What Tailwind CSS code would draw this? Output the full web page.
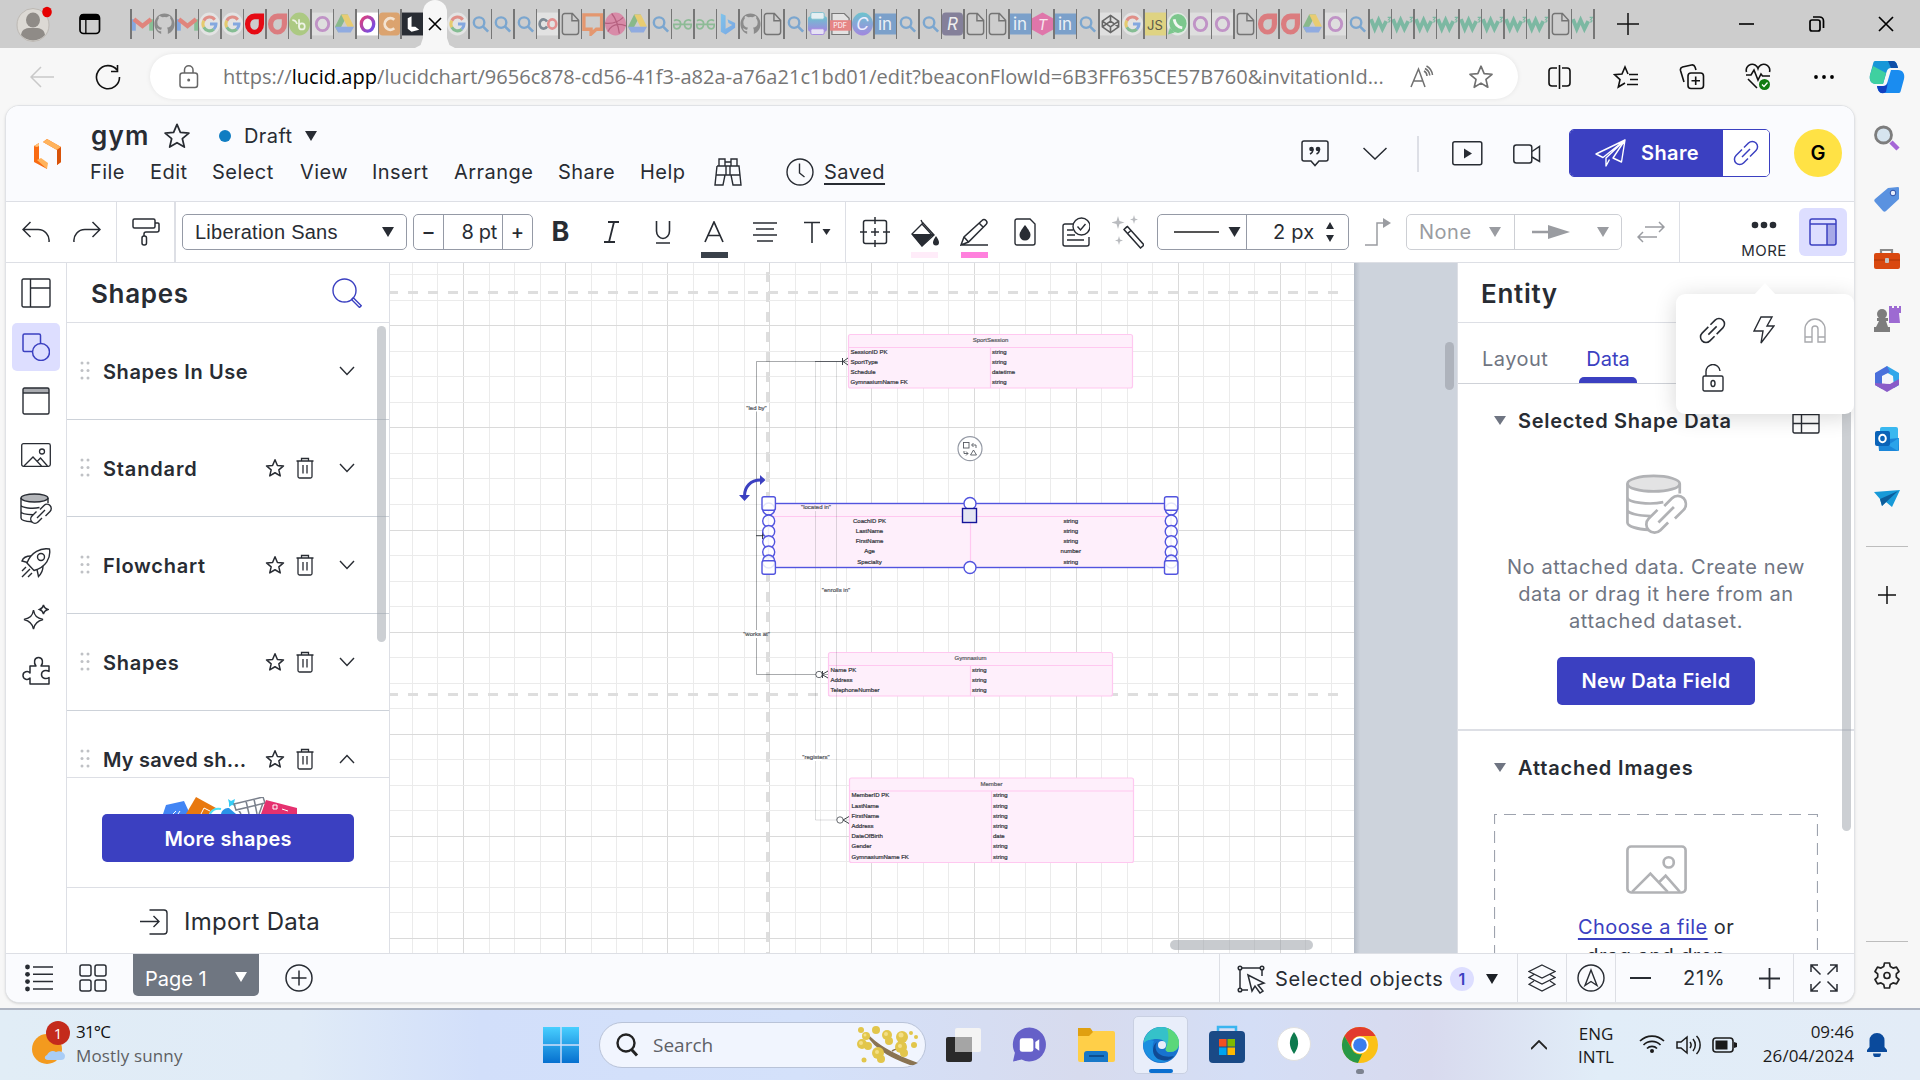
<!DOCTYPE html>
<html lang="en"><head><meta charset="utf-8"><title>gym: Lucidchart</title>
<script src="https://cdn.jsdelivr.net/npm/@tailwindcss/browser@4"></script></head>
<body class="w-[1920px] h-[1080px] overflow-hidden bg-[#f7f7f7] text-[#282c33] font-['Inter',sans-serif] text-[20px] flex flex-col">

<!-- shared symbols -->
<svg width="0" height="0" class="absolute">
<defs>
<linearGradient id="gBlue" x1="0" y1="0" x2="0" y2="1"><stop offset="0" stop-color="#48cfff"/><stop offset="1" stop-color="#0670cf"/></linearGradient>
<linearGradient id="gRing" x1="0" y1="0" x2="1" y2="1"><stop offset="0" stop-color="#e0407a"/><stop offset="1" stop-color="#6a4df0"/></linearGradient>
<linearGradient id="gTeal" x1="0" y1="0" x2="0" y2="1"><stop offset="0" stop-color="#6cc4ce"/><stop offset="1" stop-color="#a287e0"/></linearGradient>
<linearGradient id="gBing" x1="0" y1="0" x2="1" y2="1"><stop offset="0" stop-color="#7fc3ea"/><stop offset="1" stop-color="#7aa6e4"/></linearGradient>
</defs>
<symbol id="gmail" viewBox="0 0 22 24"><path d="M2 19V7" stroke="#84a8df" stroke-width="4"/><path d="M20 19V7" stroke="#88bf96" stroke-width="4"/><path d="M2 7l9 7 9-7" fill="none" stroke="#e0857d" stroke-width="4.500"/></symbol>
<symbol id="github" viewBox="0 0 22 24"><path d="M11 1C5 1 .5 6 .5 12c0 5 3 9 7 10.500v-3c-3 .5-3.500-1-4.500-3 2 0 2 2 4.500 1.500.2-1 .5-1.500 1-2-3-.5-5-2-5-5.500 0-1.500.5-3 1.500-4-.2-1-.2-2 .3-3 1.500 0 2.700.8 3.500 1.400a9 9 0 0 1 4.500 0C14 4.300 15.200 3.500 16.700 3.500c.5 1 .5 2 .3 3 1 1 1.500 2.500 1.500 4 0 3.500-2 5-5 5.500.8.7 1 1.700 1 3v3.500c4-1.500 7-5.500 7-10.500C21.500 6 17 1 11 1z" fill="#8b8b8b"/></symbol>
<symbol id="google" viewBox="0 0 22 24"><ellipse cx="11" cy="12" rx="11" ry="12" fill="#e3e3e3"/><g fill="none" stroke-width="3.200"><path d="M16.500 7.500A7 7.500 0 0 0 5 8.500" stroke="#e08f88"/><path d="M5 8.500a7.500 7.500 0 0 0 0 7" stroke="#e5cb70"/><path d="M5 15.500a7 7.500 0 0 0 10.500 2" stroke="#85bd93"/><path d="M11.500 12h6.300a7.500 7.500 0 0 1-2.300 5.500" stroke="#84a8df"/></g></symbol>
<symbol id="red" viewBox="0 0 22 24"><path fill-rule="evenodd" d="M21 1v11A10 11 0 1 1 11 1zM11 7a4.500 5.500 0 1 0 4.500 5.500V7z" fill="#e60a14"/></symbol>
<symbol id="pink" viewBox="0 0 22 24"><path fill-rule="evenodd" d="M21 1v11A10 11 0 1 1 11 1zM11 7a4.500 5.500 0 1 0 4.500 5.500V7z" fill="#db7c7f"/></symbol>
<symbol id="greenb" viewBox="0 0 22 24"><ellipse cx="11" cy="12" rx="11" ry="12" fill="#acc983"/><path d="M10.500 7v8.500M3.500 8c3 0 4 1.500 5 4" stroke="#eef3e6" stroke-width="1.800" fill="none"/><ellipse cx="13.500" cy="14.500" rx="3" ry="3.200" stroke="#eef3e6" stroke-width="1.800" fill="none"/></symbol>
<symbol id="ring" viewBox="0 0 22 24"><path d="M0 0h22v24H0z" fill="#dedede"/><ellipse cx="11" cy="12" rx="6.500" ry="7" fill="none" stroke="#c093c6" stroke-width="3"/></symbol>
<symbol id="ring2" viewBox="0 0 22 24"><path d="M0 0h22v24H0z" fill="#fff"/><ellipse cx="11" cy="12" rx="6.500" ry="7.500" fill="none" stroke="url(#gRing)" stroke-width="3.500"/></symbol>
<symbol id="drive" viewBox="0 0 22 24"><path d="M7.500 2h7L8 14l-3.500 7L1 15z" fill="#88b98a"/><path d="M7.500 2h7L21 15h-7z" fill="#e8cc72"/><path d="M1 15h20l-3.500 6h-13z" fill="#90abe0"/></symbol>
<symbol id="orangec" viewBox="0 0 22 24"><rect width="22" height="24" rx="4" fill="#dba36f"/><path d="M16 7.500a6 6 0 1 0 0 9" fill="none" stroke="#f3e3d2" stroke-width="3"/></symbol>
<symbol id="lucid" viewBox="0 0 22 24"><path d="M0 0h22v24H0z" fill="#282c33"/><path d="M6 6l4-2v11h4l4 3-8 2-4-3z" fill="#fff"/></symbol>
<symbol id="lens" viewBox="0 0 22 24"><circle cx="9.500" cy="10.500" r="5.500" fill="none" stroke="#7ba6cf" stroke-width="2.500"/><path d="M13.500 14.500L19 20" stroke="#7ba6cf" stroke-width="2.800"/></symbol>
<symbol id="co" viewBox="0 0 22 24"><path d="M0 0h22v24H0z" fill="#e2e2e2"/><path d="M10.500 9.500a4.200 4.800 0 1 0 0 5" fill="none" stroke="#7f8a94" stroke-width="2.800"/><ellipse cx="16" cy="12" rx="4.200" ry="4.800" fill="none" stroke="#e39090" stroke-width="2.800"/></symbol>
<symbol id="file" viewBox="0 0 22 24"><path d="M13 1H5a2.500 2.500 0 0 0-2.500 2.500v17A2.500 2.500 0 0 0 5 23h12a2.500 2.500 0 0 0 2.500-2.500V8zM12.500 1v7.500h7" fill="none" stroke="#747474" stroke-width="1.500"/></symbol>
<symbol id="chat" viewBox="0 0 22 24"><path d="M2 2.500h18.500v15H15l-5.500 5v-5H2z" fill="none" stroke="#e4976f" stroke-width="3.500"/></symbol>
<symbol id="dribb" viewBox="0 0 22 24"><ellipse cx="11" cy="12" rx="11" ry="12" fill="#d88ba8"/><path d="M7 1c5 6 7 13 8 21M0 11c8 1 15-2 19-6M3 20c4-8 11-9 19-6" fill="none" stroke="#b5607f" stroke-width="1.300"/></symbol>
<symbol id="gfg" viewBox="0 0 22 24"><path d="M2 8.500c3-1.500 7-.5 7 3s-1.500 5.500-4 5.500-3.500-2-3-4.500M20 8.500c-3-1.500-7-.5-7 3s1.500 5.500 4 5.500 3.500-2 3-4.500M1 12.300h20" fill="none" stroke="#8dbb96" stroke-width="1.800"/></symbol>
<symbol id="bing" viewBox="0 0 22 24"><path d="M4 1l5 2v14l7-4-4-2-1-4 8 4v5l-10 7-5-3z" fill="url(#gBing)"/></symbol>
<symbol id="print" viewBox="0 0 22 24"><rect x="1" y="4" width="20" height="16" rx="3" fill="url(#gTeal)"/><rect x="4" y="0" width="14" height="7" rx="1.500" fill="#e4eff2" stroke="#7fbfcf"/><rect x="4" y="17" width="14" height="6" rx="1.500" fill="#e6e2f4" stroke="#a287e0"/></symbol>
<symbol id="pdf" viewBox="0 0 22 24"><path d="M2 1h13l5 5v17H2z" fill="#e2e2e2" stroke="#777" stroke-width="1.300"/><path d="M0 8h22v11H0z" fill="#e58585"/></symbol>
<symbol id="canva" viewBox="0 0 22 24"><ellipse cx="11" cy="12" rx="11" ry="12" fill="url(#gTeal)"/></symbol>
<symbol id="lin" viewBox="0 0 22 24"><path d="M0 1h22v22H0z" fill="#7ba0ca"/></symbol>
<symbol id="rr" viewBox="0 0 22 24"><rect width="22" height="24" rx="4" fill="#84809a"/></symbol>
<symbol id="tt" viewBox="0 0 22 24"><path d="M11 0l11 6v12l-11 6-11-6V6z" fill="#df76aa"/></symbol>
<symbol id="codepen" viewBox="0 0 22 24"><path d="M0 0h22v24H0z" fill="#dfdfdf"/><path d="M11 3l8.500 6v6L11 21l-8.500-6V9zM11 3v6M11 15v6M2.500 9l8.500 6 8.500-6M2.500 15L11 9l8.500 6" fill="none" stroke="#666" stroke-width="1.700"/></symbol>
<symbol id="js" viewBox="0 0 22 24"><path d="M0 0h22v24H0z" fill="#dfd382"/></symbol>
<symbol id="wa" viewBox="0 0 22 24"><ellipse cx="11" cy="12" rx="11" ry="12" fill="#e0e8e2"/><ellipse cx="11.500" cy="11.500" rx="9" ry="10" fill="#7cc78d"/><path d="M1 23l2-7 5 5z" fill="#7cc78d"/><path d="M7.500 7c1 6 4 8.500 8.500 9" fill="none" stroke="#f2f7f3" stroke-width="3"/></symbol>
<symbol id="w3" viewBox="0 0 22 24"><path d="M1 7l4 10 4-9 4 9 4-8" fill="none" stroke="#7cb8a2" stroke-width="4"/><path d="M18.500 5h3l-2 2.500c2 0 2 2.500-.5 2.500" fill="none" stroke="#7cb8a2" stroke-width="1.200"/></symbol>
<symbol id="star" viewBox="0 0 24 24"><path d="M12 2l2.900 6.900 7.300.6-5.600 4.800 1.700 7.200L12 17.700l-6.300 3.800 1.700-7.200L1.800 9.500l7.300-.6z" fill="none" stroke="currentColor" stroke-width="var(--sw,1.500)" stroke-linejoin="round"/></symbol>
<symbol id="trash" viewBox="0 0 18 22"><path d="M.5 4h17M5.500 4V1.500h7V4M2 4v15.500A1.500 1.500 0 0 0 3.500 21h11a1.500 1.500 0 0 0 1.500-1.500V4M7 8v8.500M11 8v8.500" fill="none" stroke="currentColor" stroke-width="1.300"/></symbol>
<symbol id="down" viewBox="0 0 16 10"><path d="M1 1l7 7.500L15 1" fill="none" stroke="currentColor" stroke-width="1.400"/></symbol>
<symbol id="tri" viewBox="0 0 12 12"><path d="M0 1h12L6 11z" fill="currentColor"/></symbol>
<symbol id="link" viewBox="0 0 26 26"><g fill="none" stroke="currentColor" stroke-width="1.500"><path d="M11 7.500l4.500-4.500a5 5 0 0 1 7.500 7.500L17 16.500M15 18.500L10.500 23A5 5 0 0 1 3 15.500L9 9.500M9 17l8-8"/></g></symbol>
<symbol id="grip" viewBox="0 0 10 20"><g fill="#bfc1c5"><circle cx="2" cy="2" r="1.500"/><circle cx="8" cy="2" r="1.500"/><circle cx="2" cy="9.500" r="1.500"/><circle cx="8" cy="9.500" r="1.500"/><circle cx="2" cy="17" r="1.500"/><circle cx="8" cy="17" r="1.500"/></g></symbol>
<symbol id="pic" viewBox="0 0 30 24"><g fill="none" stroke="currentColor" stroke-width="1.300"><rect x=".7" y=".7" width="28.600" height="22.600" rx="1.800"/><circle cx="21" cy="8.500" r="2.500"/><path d="M3 23l9-9 8.500 9M16.500 18l3-3 7 8"/></g></symbol>
<symbol id="data" viewBox="0 0 32 32"><g fill="none" stroke="currentColor" stroke-width="1.400"><ellipse cx="14.500" cy="5" rx="13.500" ry="4" fill="var(--top,#b4b6ba)"/><path d="M1 5v20c0 2 5 3.500 11 3.800M28 5v5M1 12c0 3 12 4 18.500 2.500M1 18.500c0 2 6 3 12 3.200"/><path d="M20 16.500l4-4a4.200 4.200 0 0 1 6 6l-4.500 4.500M22 25l-4 4a4.200 4.200 0 0 1-6-6L16.500 18.500M17 25l8-8"/></g></symbol>
</svg>

<!-- tab strip -->
<div class="h-[48px] bg-[#cdcdcd] flex items-center shrink-0">
  <svg class="ml-[15px] w-[38px] h-[44px]" viewBox="0 0 38 44"><ellipse cx="18" cy="23" rx="16" ry="16.500" fill="#dcd9d4" stroke="#bdb9b4"/><ellipse cx="18" cy="18" rx="7" ry="7.500" fill="#8f8b87"/><path d="M6 33c1-7 6-7 12-7s11 0 12 7a16 16 0 0 1-24 0z" fill="#8f8b87"/><ellipse cx="32" cy="10" rx="4.800" ry="5.200" fill="#e60000"/></svg>
  <svg class="ml-[26px] w-[22px] h-[22px]" viewBox="0 0 22 22"><rect x="1" y="1.500" width="19.500" height="19" rx="3.500" fill="none" stroke="#000" stroke-width="1.700"/><path d="M1 7V4a3 3 0 0 1 3-3h13.500a3 3 0 0 1 3 3v3zM6.200 7h1.300v13H6.200z"/></svg>
  <div id="tabsA" class="ml-[29px] flex items-center h-[30px] w-[293px]"></div>
  <div class="relative w-[24px] h-[48px] bg-[#f7f7f7] rounded-t-[12px] grid place-items-center"><svg class="w-[14px] h-[14px]" viewBox="0 0 14 14"><path d="M1 1l12 12M13 1L1 13" stroke="#000" stroke-width="1.600"/></svg>
    <i class="absolute left-[-8px] bottom-0 w-[8px] h-[10px] bg-[#f7f7f7] [clip-path:polygon(100%_0,100%_100%,0_100%,70%_70%)]"></i><i class="absolute right-[-8px] bottom-0 w-[8px] h-[10px] bg-[#f7f7f7] [clip-path:polygon(0_0,0_100%,100%_100%,30%_70%)]"></i></div>
  <div id="tabsB" class="flex items-center h-[30px] w-[1147px]"></div>
  <svg class="ml-[23px] w-[22px] h-[22px]" viewBox="0 0 22 22"><path d="M11 0v22M0 11h22" stroke="#111" stroke-width="1.500"/></svg>
  <svg class="ml-[100px] w-[16px] h-[16px]" viewBox="0 0 16 16"><path d="M0 8h15" stroke="#000" stroke-width="1.600"/></svg>
  <svg class="ml-[54px] w-[16px] h-[18px]" viewBox="0 0 16 18"><g fill="none" stroke="#000" stroke-width="1.700"><rect x="1" y="5" width="10" height="11" rx="2"/><path d="M4 2h6.500A4 4 0 0 1 14.500 6v7"/></g></svg>
  <svg class="ml-[53px] w-[16px] h-[16px]" viewBox="0 0 16 16"><path d="M1 1l14 14M15 1L1 15" stroke="#000" stroke-width="1.700"/></svg>
</div>

<!-- address bar -->
<div class="h-[57px] flex items-center shrink-0">
  <svg class="ml-[30px] w-[24px] h-[22px]" viewBox="0 0 24 22"><path d="M24 11H1M11 1L1 11l10 10" fill="none" stroke="#c9c9c9" stroke-width="1.500"/></svg>
  <svg class="ml-[41px] w-[26px] h-[26px]" viewBox="0 0 26 26"><path d="M22 6A11.500 11.500 0 1 0 24.500 13M22.500 1v6.500H16" fill="none" stroke="#111" stroke-width="1.600"/></svg>
  <div class="ml-[29px] w-[1368px] h-[45px] bg-white rounded-full shadow-[0_0_5px_rgba(0,0,0,.08)] flex items-center">
    <svg class="ml-[29px] w-[20px] h-[24px]" viewBox="0 0 20 24"><g fill="none" stroke="#666" stroke-width="1.500"><rect x="1" y="8" width="17.500" height="14.500" rx="2.500"/><path d="M5.500 8V5a4.200 4.200 0 0 1 8.500 0v3"/></g><circle cx="9.700" cy="15" r="1.500" fill="#666"/></svg>
    <div class="ml-[24px] w-[1170px] font-['Open_Sans',sans-serif] text-[20px] tracking-[0.05px] text-[#767676] whitespace-nowrap">https://<span class="text-black">lucid.app</span>/lucidchart/9656c878-cd56-41f3-a82a-a76a21c1bd01/edit?beaconFlowId=6B3FF635CE57B760&amp;invitationId...</div>
    <svg class="ml-[17px] w-[24px] h-[24px]" viewBox="0 0 24 24"><g fill="none" stroke="#707070" stroke-width="1.500"><path d="M1 22L8.500 4 15 22M3.500 16h9.500M14 6a6 6 0 0 1 3 5M16.500 1a12 12 0 0 1 6 9M15 3.500a9 9 0 0 1 4.800 7"/></g></svg>
    <svg class="ml-[34px] w-[26px] h-[26px] text-[#707070]"><use href="#star"/></svg>
  </div>
  <svg class="ml-[30px] w-[24px] h-[24px]" viewBox="0 0 24 24"><g fill="none" stroke="#111" stroke-width="1.600"><path d="M9 3H4a3 3 0 0 0-3 3v12a3 3 0 0 0 3 3h5M14 3h5a3 3 0 0 1 3 3v12a3 3 0 0 1-3 3h-5M11.500 0v24"/></g></svg>
  <svg class="ml-[41px] w-[26px] h-[24px]" viewBox="0 0 26 24"><g fill="none" stroke="#111" stroke-width="1.600"><path d="M15 9l-3-7-3 7-7.500.6 5.500 5L5.300 22l6.700-4M16 9.500h9M17 14.500h8M14 19.500h11"/></g></svg>
  <svg class="ml-[40px] w-[26px] h-[26px]" viewBox="0 0 26 26"><g fill="none" stroke="#111" stroke-width="1.600"><rect x="9" y="9" width="15.500" height="15.500" rx="3"/><path d="M16.700 12.500v8.500M12.500 16.700h8.500M5 18L1.500 6.500a3 3 0 0 1 2-3.500l9-2a3 3 0 0 1 3.500 2l1 3"/></g></svg>
  <svg class="ml-[40px] w-[26px] h-[28px]" viewBox="0 0 26 28"><path d="M1.500 9A6 6 0 0 1 13 5.500 6 6 0 0 1 24.500 9M1 12h5l3-5 4 10 3-6 1.500 2H25M3 16l9 9" fill="none" stroke="#111" stroke-width="1.600"/><circle cx="19.500" cy="21.500" r="5.500" fill="#107c10"/><path d="M17 21.500l2 2 3.500-4" stroke="#fff" stroke-width="1.300" fill="none"/></svg>
  <svg class="ml-[42px] w-[22px] h-[6px]" viewBox="0 0 22 6"><circle cx="3" cy="3" r="1.900"/><circle cx="11" cy="3" r="1.900"/><circle cx="19" cy="3" r="1.900"/></svg>
  <svg class="ml-[34px] w-[36px] h-[34px]" viewBox="0 0 36 34"><path d="M6 1h18c3 0 4 3 5 7h-7c-3 0-4 2-5 6l-3 10H7C2 24 0 20 1 15L4 4c.4-2 1-3 2-3z" fill="#1797d8"/><path d="M4 6L1 15c-1 5 1 9 6 9h7l3-11z" fill="#3fd0a0"/><path d="M19 1h5c3 0 4 3 5 7h-7z" fill="#0f4fa8"/><path d="M30 33H13c-3 0-4-3-5-7h6c3 0 4-2 5-6l3-10h7c5 0 7 4 6 9l-3 11c-.4 2-1 3-2 3z" fill="#1a8cf0"/><path d="M8 26h6c3 0 4-1 5-4l-2 10c-5 3-8 0-9-6z" fill="#1140c0"/></svg>
</div>

<!-- main area -->
<div class="flex h-[898px] shrink-0">
<div class="ml-[5px] w-[1850px] border border-[#e0e2e6] rounded-[14px] overflow-hidden bg-white flex flex-col shadow-sm shrink-0">

  <!-- document header -->
  <div class="h-[96px] bg-[#fafbfe] border-b border-[#dddfe5] flex items-center shrink-0">
    <svg class="ml-[27px] mt-[1px] w-[30px] h-[32px] shrink-0" viewBox="0 0 30 32"><path d="M1 8l5-3v16l8 5v5L1 24z" fill="#f96b13"/><path d="M1 8l5-3v3L4 9z" fill="#ffc27a"/><path d="M4 22l4-2 7 5-1 6z" fill="#ffb35c"/><path d="M10 4l4-3 14 8v15l-4 3V12z" fill="#f96b13"/><path d="M10 4l4-3 14 8-4 3z" fill="#ffb35c"/><path d="M28 9v15l-4 3V12z" fill="#d8530a"/></svg>
    <div class="ml-[27px] flex flex-col w-[860px] shrink-0">
      <div class="flex items-center h-[36px] pl-px">
        <span class="text-[26px] font-semibold tracking-[1.2px] w-[72px] -mt-px">gym</span>
        <svg class="w-[28px] h-[28px]"><use href="#star"/></svg>
        <i class="ml-[28px] w-[12px] h-[12px] rounded-full bg-[#0f7dc2]"></i>
        <span class="ml-[13px] tracking-[0.4px] w-[61px]">Draft</span>
        <svg class="w-[12px] h-[12px]"><use href="#tri"/></svg>
      </div>
      <div class="flex items-center h-[36px] tracking-[0.45px]">
        <span class="w-[60px]">File</span><span class="w-[62px]">Edit</span><span class="w-[88px]">Select</span><span class="w-[72px]">View</span><span class="w-[82px]">Insert</span><span class="w-[104px]">Arrange</span><span class="w-[82px]">Share</span><span class="w-[74px]">Help</span>
        <svg class="w-[28px] h-[28px]" viewBox="0 0 28 28"><g fill="none" stroke="currentColor" stroke-width="1.400"><path d="M3 8h9v9M16 17V8h9l2 19h-8l-2-10h-6L9 27H1L3 8M5 8V1h6v7M17 8V1h6v7M11 4h6M12 8h4M2 17h24"/></g></svg>
        <svg class="ml-[44px] w-[28px] h-[28px]" viewBox="0 0 28 28"><g fill="none" stroke="currentColor" stroke-width="1.400"><circle cx="14" cy="14" r="13"/><path d="M13.500 5.500V15l5 4"/></g></svg>
        <span class="ml-[10px] mt-px underline underline-offset-[4px] decoration-2 tracking-[0.5px]">Saved</span>
      </div>
    </div>
    <svg class="ml-[351px] w-[28px] h-[27px] shrink-0" viewBox="0 0 28 27"><path d="M3 1h22a2 2 0 0 1 2 2v16a2 2 0 0 1-2 2h-7l-4 4.500L10 21H3a2 2 0 0 1-2-2V3a2 2 0 0 1 2-2z" fill="none" stroke="currentColor" stroke-width="1.500"/><g fill="currentColor"><circle cx="10.500" cy="9" r="2.300"/><circle cx="17" cy="9" r="2.300"/></g><path d="M12 9c0 3-1 4-3 5M18.500 9c0 3-1 4-3 5" fill="none" stroke="currentColor" stroke-width="1.500"/></svg>
    <svg class="ml-[34px] w-[24px] h-[13px]" viewBox="0 0 24 13"><path d="M.5 1L12 12 23.500 1" fill="none" stroke="currentColor" stroke-width="1.500"/></svg>
    <i class="ml-[30px] w-[2px] h-[36px] bg-[#dddfe6]"></i>
    <svg class="ml-[33px] w-[31px] h-[25px]" viewBox="0 0 31 25"><rect x=".8" y=".8" width="29" height="23" rx="2" fill="none" stroke="currentColor" stroke-width="1.500"/><path d="M12 7.500l8 5-8 5z" fill="currentColor"/></svg>
    <svg class="ml-[30px] w-[28px] h-[20px]" viewBox="0 0 28 20"><g fill="none" stroke="currentColor" stroke-width="1.500"><rect x=".8" y="1" width="18" height="18" rx="2.500"/><path d="M19 7.500l7.500-5v15L19 13"/></g></svg>
    <div class="ml-[28px] -mt-px flex h-[48px] w-[201px] rounded-[5px] border border-[#3b40c1] overflow-hidden shrink-0">
      <div class="w-[153px] bg-[#3b40c1] text-white font-semibold flex items-center tracking-[0.4px]"><svg class="ml-[25px] mr-[15px] w-[31px] h-[28px]" viewBox="0 0 31 28"><path d="M30 1L1 15l7 3.500L30 1l-3.500 22-8.500-4L30 1 11 19v8l3.500-6.500" fill="none" stroke="#fff" stroke-width="1.400" stroke-linejoin="round"/></svg>Share</div>
      <div class="flex-1 bg-white grid place-items-center text-[#3b40c1]"><svg class="w-[26px] h-[26px]"><use href="#link"/></svg></div>
    </div>
    <div class="ml-[24px] -mt-px w-[48px] h-[48px] rounded-full bg-[#ffe245] text-black font-semibold grid place-items-center shrink-0">G</div>
  </div>

  <!-- formatting toolbar -->
  <div class="h-[61px] border-b border-[#dddfe5] flex items-stretch shrink-0">
    <div class="ml-[4px] w-[52px] grid place-items-center"><svg class="w-[28px] h-[22px]" viewBox="0 0 28 22"><path d="M8.500 1L1 8.500 8.500 16M1 8.500h15A11 11 0 0 1 27 21" fill="none" stroke="currentColor" stroke-width="1.500"/></svg></div>
    <div class="w-[55px] pr-[5px] grid place-items-center border-r border-[#dddfe5]"><svg class="w-[28px] h-[22px]" viewBox="0 0 28 22"><path d="M19.500 1L27 8.500 19.500 16M27 8.500H12A11 11 0 0 0 1 21" fill="none" stroke="currentColor" stroke-width="1.500"/></svg></div>
    <div class="w-[59px] grid place-items-center border-r-2 border-[#dddfe5]"><svg class="w-[28px] h-[28px]" viewBox="0 0 28 28"><g fill="none" stroke="currentColor" stroke-width="1.500"><rect x="1" y="1" width="22" height="9" rx="1.500"/><path d="M23 5h3a1 1 0 0 1 1 1v6a2 2 0 0 1-2 2H14a2 2 0 0 0-2 2v2"/><rect x="10" y="18" width="4.500" height="9" rx="2"/></g></svg></div>
    <div class="ml-[6px] w-[225px] flex items-center"><div class="w-full h-[36px] rounded-[5px] border border-[#959aa6] flex items-center justify-between pl-[12px] pr-[12px] font-['Liberation_Sans',sans-serif] text-[20px] tracking-[0.25px]">Liberation Sans<svg class="w-[12px] h-[12px]"><use href="#tri"/></svg></div></div>
    <div class="ml-[6px] w-[120px] flex items-center"><div class="w-full h-[36px] rounded-[5px] border border-[#959aa6] flex text-[20px]"><div class="w-[30px] border-r border-[#959aa6] grid place-items-center leading-none font-medium">–</div><div class="flex-1 border-r border-[#959aa6] text-right pr-[5px] pt-[2px] tracking-[-0.3px]">8 pt</div><div class="w-[29px] grid place-items-center leading-none font-medium">+</div></div></div>
    <div class="w-[53px] pl-[2px] grid place-items-center text-[27px] font-bold">B</div>
    <div class="w-[51px] grid place-items-center"><svg class="w-[15px] h-[22px]" viewBox="0 0 15 22"><path d="M4 1h11M0 21h11M10 1L5 21" stroke="currentColor" stroke-width="1.800"/></svg></div>
    <div class="w-[52px] grid place-items-center"><svg class="w-[18px] h-[24px]" viewBox="0 0 18 24"><path d="M2.500 1v10a6.500 7.500 0 0 0 13 0V1M2 23h14" fill="none" stroke="currentColor" stroke-width="1.600"/></svg></div>
    <div class="w-[50px] flex flex-col items-center pt-[19px]"><svg class="w-[20px] h-[22px]" viewBox="0 0 20 22"><path d="M1 21L10 1l9 20M4 14.500h12" fill="none" stroke="currentColor" stroke-width="1.700"/></svg><i class="mt-[9px] w-[27px] h-[6px] bg-[#3a414a]"></i></div>
    <div class="w-[52px] grid place-items-center"><svg class="w-[24px] h-[20px]" viewBox="0 0 24 20"><path d="M0 1h24M3 7h18M0 13h24M4 19h16" stroke="currentColor" stroke-width="1.500"/></svg></div>
    <div class="w-[55px] pr-[2px] grid place-items-center border-r border-[#dddfe5]"><svg class="w-[28px] h-[22px]" viewBox="0 0 28 22"><path d="M1 1.500h16M9 1v21" stroke="currentColor" stroke-width="1.600"/><path d="M19.500 8h8l-4 6z" fill="currentColor"/></svg></div>
    <div class="ml-[4px] w-[50px] grid place-items-center"><svg class="w-[30px] h-[30px]" viewBox="0 0 30 30"><g fill="none" stroke="currentColor" stroke-width="1.500"><rect x="3.500" y="3.500" width="23" height="23" rx="2"/><path d="M15 0v7M15 11v8M15 23v7M0 15h7M11 15h8M23 15h7"/></g></svg></div>
    <div class="w-[49px] flex flex-col items-center pt-[17px]"><svg class="w-[28px] h-[28px]" viewBox="0 0 28 28"><path d="M10 1l2 4M11 5l11 12" stroke="currentColor" stroke-width="1.400"/><path d="M12 4L1 15l10 12 12-11z" fill="none" stroke="currentColor" stroke-width="1.400"/><path d="M1 15h22L11 27.500z" fill="currentColor"/><path d="M25 17c2 3 3 5 3 6.500a3 3 0 0 1-6 0c0-1.500 1-3.500 3-6.500z" fill="currentColor"/></svg><i class="mt-[5px] w-[27px] h-[6px] bg-[#ffecf9]"></i></div>
    <div class="w-[50px] flex flex-col items-center pt-[16px]"><svg class="w-[28px] h-[28px]" viewBox="0 0 28 28"><path d="M1 27l3-8L22 2.500a2.800 2.800 0 0 1 4 4L8.500 24zM4 19l4.500 5M19 5l4.500 4.500M1 27h27" fill="none" stroke="currentColor" stroke-width="1.500"/></svg><i class="mt-[6px] w-[27px] h-[6px] bg-[#ff80dd]"></i></div>
    <div class="w-[51px] grid place-items-center"><svg class="w-[22px] h-[28px]" viewBox="0 0 22 28"><path d="M3 1h13l5 5v19a2 2 0 0 1-2 2H3a2 2 0 0 1-2-2V3a2 2 0 0 1 2-2z" fill="none" stroke="currentColor" stroke-width="1.400"/><path d="M11 7c4 5 5.500 8 5.500 10a5.500 5.500 0 0 1-11 0c0-2 1.500-5 5.500-10z" fill="currentColor"/></svg></div>
    <div class="w-[52px] grid place-items-center"><svg class="w-[28px] h-[30px]" viewBox="0 0 28 30"><g fill="none" stroke="currentColor" stroke-width="1.400"><path d="M12 7H3a2 2 0 0 0-2 2v18a2 2 0 0 0 2 2h22a2 2 0 0 0 2-2v-7M5 13h6M5 18h8M5 23h17"/><circle cx="19.500" cy="9.500" r="8.500"/><path d="M15.500 9.500l3 3.500 5-6"/></g></svg></div>
    <div class="w-[51px] grid place-items-center"><svg class="w-[32px] h-[34px]" viewBox="0 0 32 34"><path d="M6 1l1.500 5 5 1.500-5 1.500L6 14 4.500 9-.5 7.500l5-1.500zM22 0l1 3.500 3 1-3 1L22 9l-1-3.500-3-1 3-1zM7 21l1 3.500 3 1-3 1L7 30l-1-3.500-3-1 3-1z" fill="#b9bbbf"/><path d="M12 14.500l3.500-3L32 30l-3.500 3zM15 11.500l-3 3M19 15.500l-3.500 3" fill="none" stroke="currentColor" stroke-width="1.500"/></svg></div>
    <div class="ml-[4px] w-[192px] flex items-center"><div class="w-full h-[36px] rounded-[5px] border border-[#959aa6] flex"><div class="w-[89px] border-r border-[#959aa6] flex items-center pl-[16px]"><i class="w-[45px] h-[2px] bg-[#555]"></i><svg class="ml-[9px] w-[13px] h-[12px]"><use href="#tri"/></svg></div><div class="flex-1 flex items-center pl-[26px] tracking-[0.2px]">2 px<svg class="ml-[12px] w-[8px] h-[22px]" viewBox="0 0 8 22"><path d="M0 8h8L4 1zM0 14h8l-4 7z" fill="currentColor"/></svg></div></div></div>
    <div class="w-[57px] grid place-items-center text-[#9a9ca1]"><svg class="w-[26px] h-[28px]" viewBox="0 0 26 28"><path d="M0 27h12V5h8" fill="none" stroke="currentColor" stroke-width="1.500"/><path d="M18 0l8 5-8 5z" fill="currentColor"/></svg></div>
    <div class="w-[216px] flex items-center text-[#9a9ca1]"><div class="w-full h-[36px] rounded-[5px] border border-[#cdcfd4] flex"><div class="w-[108px] border-r border-[#cdcfd4] flex items-center pl-[12px] tracking-[0.5px]">None<svg class="ml-[17px] w-[12px] h-[12px]"><use href="#tri"/></svg></div><div class="flex-1 flex items-center pl-[17px]"><svg class="w-[38px] h-[16px]" viewBox="0 0 38 16"><path d="M0 8h18" stroke="currentColor" stroke-width="2.500"/><path d="M16 1l22 7-22 7z" fill="currentColor"/></svg><svg class="ml-[27px] w-[12px] h-[12px]"><use href="#tri"/></svg></div></div></div>
    <div class="w-[58px] grid place-items-center border-r border-[#dddfe5] text-[#9a9ca1]"><svg class="w-[28px] h-[22px]" viewBox="0 0 28 22"><path d="M8 6h19M22 1l5 5-5 5M20 16H1M6 11l-5 5 5 5" fill="none" stroke="currentColor" stroke-width="1.500"/></svg></div>
    <div class="ml-[54px] w-[60px] flex flex-col items-center pt-[19px]"><svg class="w-[26px] h-[8px]" viewBox="0 0 26 8"><g fill="currentColor"><circle cx="4" cy="4" r="3.300"/><circle cx="13" cy="4" r="3.300"/><circle cx="22" cy="4" r="3.300"/></g></svg><span class="text-[15px] tracking-[0.4px] leading-[16px] mt-[14px]">MORE</span></div>
    <div class="ml-[5px] self-center w-[48px] h-[48px] rounded-[6px] bg-[#dddeff] grid place-items-center text-[#3b40c1]"><svg class="w-[28px] h-[28px]" viewBox="0 0 28 28"><rect x="18" y="6" width="9" height="21" fill="#a7a9e8"/><rect x="1" y="1" width="26" height="26" rx="2" fill="none" stroke="currentColor" stroke-width="1.500"/><path d="M1 6h26M18 6v21" stroke="currentColor" stroke-width="1.500"/></svg></div>
  </div>

  <!-- body -->
  <div class="flex h-[690px] shrink-0">
    <!-- icon rail -->
    <div class="w-[61px] border-r border-[#dddfe5] flex flex-col items-center pt-[6px] shrink-0">
      <div class="w-[48px] h-[48px] grid place-items-center"><svg class="w-[30px] h-[30px]" viewBox="0 0 30 30"><g fill="none" stroke="currentColor" stroke-width="1.400"><rect x="1" y="1" width="28" height="28" rx="1.500"/><path d="M9.500 1v28M9.500 10H29"/></g></svg></div>
      <div class="mt-[6px] w-[48px] h-[48px] rounded-[5px] bg-[#dddeff] grid place-items-center text-[#3b40c1]"><svg class="w-[28px] h-[28px]" viewBox="0 0 28 28"><g stroke="currentColor" stroke-width="1.500"><rect x="1" y="1" width="17.500" height="17.500" rx="1.500" fill="none"/><circle cx="19" cy="19" r="8.500" fill="#dddeff"/></g></svg></div>
      <div class="mt-[6px] w-[48px] h-[48px] grid place-items-center"><svg class="w-[28px] h-[28px]" viewBox="0 0 28 28"><path d="M1 1h26v5H1z" fill="#a9abb0"/><rect x="1" y="1" width="26" height="26" rx="1.500" fill="none" stroke="currentColor" stroke-width="1.400"/><path d="M1 6h26" stroke="currentColor" stroke-width="1.400"/></svg></div>
      <div class="mt-[6px] w-[48px] h-[48px] grid place-items-center"><svg class="w-[30px] h-[24px]"><use href="#pic"/></svg></div>
      <div class="mt-[6px] w-[48px] h-[48px] grid place-items-center"><svg class="w-[32px] h-[32px]"><use href="#data"/></svg></div>
      <div class="mt-[6px] w-[48px] h-[48px] grid place-items-center"><svg class="w-[30px] h-[30px]" viewBox="0 0 30 30"><g fill="none" stroke="currentColor" stroke-width="1.400"><path d="M28.500 1C20-.5 10 4 6 15l7 7.500C25 19 30 10 28.500 1z"/><circle cx="20" cy="9" r="3.500"/><path d="M10 8C5 8 2 10 1 13l5.500 1.500M22 18c0 5-2 8-4.500 10.500L16 21.500M1 23l4-4M1 29l8-8M7 29l4-4"/></g></svg></div>
      <div class="mt-[6px] w-[48px] h-[48px] grid place-items-center"><svg class="w-[26px] h-[26px]" viewBox="0 0 26 26"><path d="M10.500 6c1 6 3.500 8 9.500 9.500-6 1.500-8.500 4-9.500 9.500-1-5.500-3.500-8-9.500-9.500 6-1.500 8.500-3.500 9.500-9.500zM20.500 1c.5 2.500 1.500 3.500 4.500 4.500-3 1-4 2-4.500 4.500-.5-2.500-1.500-3.500-4-4.500 2.500-1 3.500-2 4-4.500z" fill="none" stroke="currentColor" stroke-width="1.400"/></svg></div>
      <div class="mt-[6px] w-[48px] h-[48px] grid place-items-center"><svg class="w-[28px] h-[29px] -mt-[2px] -ml-px" viewBox="0 0 28 29"><path d="M8 28v-6c-2 2.500-7 1.500-7-2.500s5-5 7-2.500V10h6c-2.500-3-2-8.500 2.500-8.500S21.500 7 19 10h8v5.500c-3-2-7.500-1-7.500 3s4.500 5 7.500 3V28z" fill="none" stroke="currentColor" stroke-width="1.500" stroke-linejoin="round"/></svg></div>
    </div>

    <!-- shapes panel -->
    <div class="relative w-[323px] border-r border-[#dddfe5] flex flex-col shrink-0">
      <div class="h-[60px] border-b border-[#dddfe5] flex items-center justify-between pl-[24px] pr-[27px] shrink-0"><span class="text-[26px] font-semibold tracking-[0.7px] pt-[2px]">Shapes</span><svg class="w-[30px] h-[30px] text-[#3b40c1]" viewBox="0 0 30 30"><g fill="none" stroke="currentColor" stroke-width="1.400"><circle cx="12.500" cy="12.500" r="11.500"/><path d="M19.500 21.500l1.800-1.800 8 8-1.800 1.800z"/></g></svg></div>
      <div id="libs" class="h-[454px] overflow-hidden font-semibold"></div>
      <div class="h-[110px] border-t border-[#dddfe5] flex flex-col items-center pt-[19px] shrink-0">
        <svg class="w-[134px] h-[17px] ml-[4px]" viewBox="0 0 134 17"><path d="M0 17l3-9 18-4 6 13z" fill="#4285f4"/><path d="M23 17L33 0l20 11v6z" fill="#e8780f"/><path d="M38 17l3-6 6 3" fill="none" stroke="#fff"/><path d="M10 17l3-3m2 3l2-3" stroke="#fff"/><path d="M46 17c4-7 12-7 20-5l7 5z" fill="#fff"/><path d="M58 17c1-5 5-6 8-6l7 6z" fill="#2a93e8"/><path d="M47 17c2-4 6-6 11-5" fill="none" stroke="#4de1f5" stroke-width="2"/><path d="M65 2l3 2 4-2-1 4 2 3-4-1-3 2v-4z" fill="#36cdf5"/><path d="M71 7l29-7 2 6-29 7zM78 17l-3-5M86 17l-3-13M94 17L91 2M100 6l-4 11" fill="none" stroke="#7a808c" stroke-width="1.500"/><path d="M103 3l31 8v6H98z" fill="#e5316f"/><path d="M110 8h4v4h-4zM119 12l6 2" fill="none" stroke="#fff"/></svg>
        <div class="w-[252px] h-[48px] bg-[#3b40c1] rounded-[5px] text-white font-semibold tracking-[0.2px] grid place-items-center pt-px">More shapes</div>
      </div>
      <div class="flex-1 border-t border-[#dddfe5] flex items-center text-[24px] pl-[73px] pt-[2px]"><svg class="w-[28px] h-[26px]" viewBox="0 0 28 26"><path d="M0 12.500h19M13.500 7l5.500 5.500-5.500 5.500M9.500 1H24a3 3 0 0 1 3 3v18a3 3 0 0 1-3 3H9.500" fill="none" stroke="currentColor" stroke-width="1.400"/></svg><span class="ml-[16px] tracking-[0.3px]">Import Data</span></div>
      <i class="absolute left-[310px] top-[63px] w-[9px] h-[316px] rounded-full bg-[#9aa0a8]/50"></i>
    </div>

    <!-- canvas -->
    <div class="relative w-[1068px] bg-[#cdd3dc] border-r border-[#dddfe5] shrink-0">
      <svg id="cv" class="block w-[1067px] h-[690px] font-['Liberation_Sans',sans-serif]" viewBox="390 263 1067 690">
        <defs><linearGradient id="sh"><stop offset="0" stop-color="#b3bac5"/><stop offset="1" stop-color="#cdd3dc"/></linearGradient></defs>
        <rect x="390" y="263" width="964" height="690" fill="#fff"/><rect x="1354" y="263" width="6" height="690" fill="url(#sh)"/>
        <g id="grid"></g>
        <g stroke="#dedede" stroke-width="3" stroke-dasharray="10 10"><path d="M388 292.500H1340M388 694.500H1340M767.500 272V953"/></g>
        <g id="ents"></g>
      </svg>
      <i class="absolute left-[780px] top-[677px] w-[143px] h-[10px] rounded-full bg-[#9aa0a8]/55"></i>
      <i class="absolute left-[1055px] top-[79px] w-[9px] h-[48px] rounded-full bg-[#aeb3bc]"></i>
    </div>

    <!-- property panel -->
    <div class="relative w-[396px] flex flex-col overflow-hidden shrink-0">
      <div class="h-[60px] border-b border-[#dddfe5] flex items-center pl-[23px] pt-[2px] text-[26px] font-semibold tracking-[0.7px] shrink-0">Entity</div>
      <div class="h-[61px] border-b border-[#cfd2d8] flex items-end text-[#6f7582] tracking-[0.45px] shrink-0"><span class="ml-[24px] w-[97px] pb-[9px]">Layout</span><span class="w-[58px] h-[51px] pt-[12px] text-center text-[#3b40c1] flex flex-col items-center justify-between"><b class="font-normal tracking-normal">Data</b><i class="w-[58px] h-[6px] rounded-t-[5px] bg-[#3b40c1]"></i></span></div>
      <div class="h-[347px] border-b-2 border-[#dddfe5] flex flex-col items-center shrink-0">
        <div class="self-stretch h-[72px] flex items-center pl-[36px] font-semibold tracking-[0.7px]"><svg class="w-[12px] h-[9px] text-[#6f7582]" viewBox="0 0 12 10" preserveAspectRatio="none"><path d="M0 0h12L6 10z" fill="currentColor"/></svg><span class="ml-[12px] mt-[2px] w-[274px]">Selected Shape Data</span><svg class="w-[28px] h-[28px]" viewBox="0 0 28 28"><g fill="none" stroke="currentColor" stroke-width="1.400"><rect x="1" y="1" width="26" height="26" rx="1.500"/><path d="M1 8.500h26M1 17.500h26M9.500 8.500V27"/></g></svg></div>
        <svg class="mt-[18px] w-[63px] h-[62px] text-[#b1b2b5] [--top:#e3e3e4]" viewBox="0 0 32 32"><use href="#data"/></svg>
        <div class="mt-[18px] text-center text-[#6f7582] leading-[27px] tracking-[0.6px] w-[320px]">No attached data. Create new<br>data or drag it here from an<br>attached dataset.</div>
        <div class="mt-[22px] w-[198px] h-[48px] bg-[#3b40c1] rounded-[5px] text-white font-semibold tracking-[0.3px] grid place-items-center shrink-0">New Data Field</div>
      </div>
      <div class="flex-1 flex flex-col overflow-hidden">
        <div class="h-[72px] flex items-center pl-[36px] font-semibold tracking-[0.85px] shrink-0"><svg class="w-[12px] h-[9px] text-[#6f7582]" viewBox="0 0 12 10" preserveAspectRatio="none"><path d="M0 0h12L6 10z" fill="currentColor"/></svg><span class="ml-[12px] mt-[2px]">Attached Images</span></div>
        <div class="ml-[36px] mt-[11px] w-[324px] h-[200px] relative flex flex-col items-center shrink-0">
          <svg class="absolute left-0 top-0 w-[324px] h-[200px]" viewBox="0 0 324 200"><path d="M.5 200V.5H323.500V200" fill="none" stroke="#9ea3ae" stroke-width="1.200" stroke-dasharray="12 7"/></svg>
          <svg class="mt-[31px] w-[61px] h-[49px] text-[#b1b2b5]" viewBox="0 0 30 24"><use href="#pic"/></svg>
          <div class="mt-[19px] text-center leading-[29px] tracking-[0.45px]"><span class="text-[#3b40c1] underline underline-offset-[4px] decoration-[1.500px]">Choose a file</span> or<br>drag and drop</div>
        </div>
      </div>
      <i class="absolute left-[384px] top-[140px] w-[9px] h-[428px] rounded-full bg-[#9aa0a8]/50"></i>
      <!-- overflow menu -->
      <div class="absolute left-[218px] top-[31px] w-[178px] h-[120px] bg-white rounded-[9px] shadow-[0_3px_22px_rgba(0,0,0,.16)] grid grid-cols-3 pl-[11px] pr-[13px] pt-[12px] content-start">
        <i class="absolute left-[78px] top-[-11px] w-[22px] h-[12px] bg-white [clip-path:polygon(50%_0,100%_100%,0_100%)]"></i>
        <span class="h-[48px] grid place-items-center"><svg class="w-[27px] h-[27px]"><use href="#link"/></svg></span>
        <span class="h-[48px] grid place-items-center"><svg class="w-[22px] h-[28px]" viewBox="0 0 22 28"><path d="M8 1h11l-5 9h7L8 27l2-12H1z" fill="none" stroke="currentColor" stroke-width="1.400"/></svg></span>
        <span class="h-[48px] grid place-items-center text-[#a8a9ad]"><svg class="w-[22px] h-[25px]" viewBox="0 0 22 25"><path d="M1 24V11a10 10 0 0 1 20 0v13h-7V11a3 3 0 0 0-6 0v13zM1 19h7M14 19h7" fill="none" stroke="currentColor" stroke-width="1.400"/></svg></span>
        <span class="h-[48px] grid place-items-center"><svg class="w-[22px] h-[28px]" viewBox="0 0 22 28"><g fill="none" stroke="currentColor" stroke-width="1.400"><rect x="1" y="12" width="20" height="15" rx="1.500"/><path d="M4 12V8a7 7 0 0 1 14-1"/><ellipse cx="11" cy="19.500" rx="2" ry="3"/></g></svg></span>
      </div>
    </div>
  </div>

  <!-- status bar -->
  <div class="flex-1 border-t border-[#dddfe5] bg-[#fafbfe] flex items-stretch">
    <svg class="ml-[19px] mt-[10px] w-[28px] h-[28px]" viewBox="0 0 28 28"><g fill="currentColor"><circle cx="2.500" cy="3" r="2.400"/><circle cx="2.500" cy="10.300" r="2.400"/><circle cx="2.500" cy="17.600" r="2.400"/><circle cx="2.500" cy="25" r="2.400"/></g><path d="M8 3h20M8 10.300h20M8 17.600h20M8 25h20" stroke="currentColor" stroke-width="1.500"/></svg>
    <svg class="ml-[26px] mt-[10px] w-[28px] h-[28px]" viewBox="0 0 28 28"><g fill="none" stroke="currentColor" stroke-width="1.500"><rect x="1" y="1" width="11" height="11" rx="2"/><rect x="16" y="1" width="11" height="11" rx="2"/><rect x="1" y="16" width="11" height="11" rx="2"/><rect x="16" y="16" width="11" height="11" rx="2"/></g></svg>
    <div class="ml-[26px] w-[126px] h-[42px] bg-[#6f7681] rounded-b-[5px] text-white flex items-center pl-[12px] pt-[7px]"><span class="w-[90px]">Page 1</span><svg class="w-[12px] h-[12px] -mt-[4px]"><use href="#tri"/></svg></div>
    <svg class="ml-[26px] mt-[10px] w-[28px] h-[28px]" viewBox="0 0 28 28"><g fill="none" stroke="currentColor" stroke-width="1.500"><circle cx="14" cy="14" r="13"/><path d="M14 6.500v15M6.500 14h15"/></g></svg>
    <div class="ml-auto w-[298px] border-l border-[#dddfe5] flex items-center pl-[17px] pt-px tracking-[0.7px]"><svg class="w-[30px] h-[30px]" viewBox="0 0 30 30"><g fill="none" stroke="currentColor" stroke-width="1.500"><circle cx="3" cy="4" r="1.800"/><circle cx="25" cy="4" r="1.800"/><circle cx="3" cy="26" r="1.800"/><path d="M5 4h18M25 6v6M3 6v18M5 26h6M11 11l4 16 3-5 5 7 3-2-5-6 6-2z"/></g></svg><span class="ml-[8px] w-[175px] whitespace-nowrap">Selected objects</span><b class="w-[24px] h-[24px] rounded-full bg-[#dddeff] text-[#3b40c1] text-[16px] font-semibold grid place-items-center tracking-normal">1</b><svg class="ml-[12px] w-[12px] h-[12px] text-[#1c2026]"><use href="#tri"/></svg></div>
    <div class="w-[49px] border-l border-[#dddfe5] grid place-items-center"><svg class="w-[28px] h-[28px]" viewBox="0 0 28 28"><g fill="none" stroke="currentColor" stroke-width="1.300"><path d="M14 1l13 6.500L14 14 1 7.500zM6 10.500L1 13.500 14 20l13-6.500-5-3M6 17l-5 3.300L14 27l13-6.700L22 17"/></g></svg></div>
    <div class="w-[49px] border-l border-[#dddfe5] grid place-items-center"><svg class="w-[28px] h-[28px]" viewBox="0 0 28 28"><g fill="none" stroke="currentColor" stroke-width="1.400"><circle cx="14" cy="14" r="13"/><path d="M14 6l6 15.500-6-4-6 4z"/></g></svg></div>
    <div class="w-[178px] border-l border-[#dddfe5] flex items-center"><i class="ml-[14px] w-[21px] h-[2px] bg-[#282c33]"></i><span class="ml-[32px] w-[76px] tracking-[0.8px]">21%</span><svg class="w-[21px] h-[21px]" viewBox="0 0 21 21"><path d="M10.500 0v21M0 10.500h21" stroke="currentColor" stroke-width="1.800"/></svg></div>
    <div class="w-[61px] border-l border-[#dddfe5] grid place-items-center"><svg class="w-[28px] h-[28px]" viewBox="0 0 28 28"><path d="M10.500 10.500L1 1M1 8V1h7M17.500 10.500L27 1M20 1h7v7M10.500 17.500L1 27M1 20v7h7M17.500 17.500L27 27M20 27h7v-7" fill="none" stroke="currentColor" stroke-width="1.500"/></svg></div>
  </div>
</div>

<!-- browser sidebar -->
<div class="w-[63px] flex flex-col items-center">
  <svg class="mt-[20px] w-[26px] h-[26px]" viewBox="0 0 26 26"><circle cx="9.500" cy="10" r="8" fill="#d6e4ef" stroke="#7d7d7d" stroke-width="2.800"/><path d="M17 17l7 7" stroke="#a566d6" stroke-width="4.500"/></svg>
  <svg class="mt-[35px] w-[26px] h-[26px]" viewBox="0 0 26 26"><path d="M14 2l10-1c1 0 1 1 1 1v11L12 25c-1 1-2 1-3 0L1 16c-1-1-1-2 0-3z" fill="#5a92e0"/><circle cx="19" cy="7" r="2.800" fill="#e8eefb" stroke="#2b4fa8"/></svg>
  <svg class="mt-[36px] w-[28px] h-[22px]" viewBox="0 0 28 22"><path d="M8 6V2h11v4" fill="none" stroke="#8a8a8a" stroke-width="2.200"/><rect x="1" y="5" width="26" height="16" rx="2" fill="#d9480f"/><path d="M1 12h26" stroke="#a83508"/><rect x="12" y="10" width="4" height="5" rx="1" fill="#c4c4c4"/></svg>
  <svg class="mt-[35px] w-[28px] h-[28px]" viewBox="0 0 28 28"><path d="M16 1h3v2h2V1h3v2h2V1h2v7h-2l1 10H16z" fill="#9d6ad2"/><g fill="#7d7d7d"><circle cx="9" cy="9" r="5"/><path d="M4 13h11v3h-2l2 6h2v5H1v-5h2l3-6H4z"/></g></svg>
  <svg class="mt-[32px] w-[26px] h-[28px]" viewBox="0 0 26 28"><path d="M13 1L25 8v12l-5 3-1-12-9-5z" fill="#31a7ea"/><path d="M13 1L1 8v12l7 4V11l8-4z" fill="#4a6fdb"/><path d="M1 18v2l12 7 12-7v-6l-9 5z" fill="#8a5cc8"/><circle cx="13" cy="14" r="4.500" fill="#f4f4fb"/></svg>
  <svg class="mt-[33px] w-[26px] h-[26px]" viewBox="0 0 26 26"><rect x="6" y="1" width="18" height="15" rx="2" fill="#39b8f0"/><path d="M4 14l21-2v12a1 1 0 0 1-1 1H5z" fill="#1a86d9"/><path d="M25 12L14 19l10 6z" fill="#2aa3ea"/><rect x="1" y="5" width="15" height="15" rx="2" fill="#0a63b8"/><ellipse cx="8.500" cy="12.500" rx="3.300" ry="3.800" fill="none" stroke="#fff" stroke-width="2"/></svg>
  <svg class="mt-[37px] w-[26px] h-[20px]" viewBox="0 0 26 20"><path d="M0 3l26-2-8 17-6-5-4 4-2-7z" fill="#189ad8"/><path d="M6 10L24 2 8 17z" fill="#0d5e9c"/></svg>
  <i class="mt-[37px] w-[42px] h-px bg-[#bdbdbd]"></i>
  <svg class="mt-[39px] w-[18px] h-[18px]" viewBox="0 0 18 18"><path d="M9 0v18M0 9h18" stroke="#111" stroke-width="1.500"/></svg>
  <i class="mt-[337px] w-[42px] h-px bg-[#bdbdbd]"></i>
  <svg class="mt-[20px] w-[26px] h-[27px]" viewBox="0 0 26 27"><g fill="none" stroke="#222" stroke-width="1.700" stroke-linejoin="round"><path d="M10.500 1h5l.8 3.600 2.700 1.500 3.500-1 2.500 4.400-2.700 2.400v3.200l2.700 2.400-2.500 4.400-3.500-1-2.700 1.500-.8 3.600h-5l-.8-3.600L7 20.900l-3.500 1L1 17.500l2.700-2.400v-3.200L1 9.500l2.500-4.400 3.500 1 2.700-1.500z"/><circle cx="13" cy="13.500" r="3"/></g></svg>
</div>
</div>

<!-- taskbar -->
<div class="mt-[5px] h-[72px] border-t-2 border-[#aeb5c2] bg-[linear-gradient(90deg,#e1edf6_0,#e0ebf7_300px,#d2dffa_480px,#d4e1fa_800px,#d7dbee_1080px,#d4def6_1250px,#d8daee_1430px,#e1edf8_1600px,#e3ecf7_100%)] flex items-center shrink-0 font-['Open_Sans',sans-serif] text-[17px] leading-[24px]">
  <div class="relative ml-[31px] w-[40px] h-[42px] -mt-[6px]"><svg class="w-[40px] h-[44px]" viewBox="0 0 40 44"><circle cx="16" cy="28" r="15" fill="#f39a1e"/><path d="M16 34c2-4 6-5 9-3 4-2 9 1 9 4s-2 4-4 4H17c-4 0-4-4-1-5z" fill="#a9cdf6"/></svg><b class="absolute left-[15px] top-0 w-[24px] h-[24px] rounded-full bg-[#c42b1c] text-white text-[15px] font-normal grid place-items-center">1</b></div>
  <div class="ml-[5px] w-[467px] -mt-[3px]"><div class="tracking-[-0.8px] text-[#111]">31°C</div><div class="text-[#5d5f63] tracking-[0.15px]">Mostly sunny</div></div>
  <svg class="w-[36px] h-[36px]" viewBox="0 0 36 36"><path d="M0 0h17.300v17.300H0zM18.700 0H36v17.300H18.700zM0 18.700h17.300V36H0zM18.700 18.700H36V36H18.700z" fill="url(#gBlue)"/></svg>
  <div class="ml-[20px] w-[327px] h-[46px] rounded-full bg-[#f1f5fe] border border-[#b9c3d8] flex items-center text-[19px] text-[#5e6066] shrink-0"><svg class="ml-[15px] w-[24px] h-[24px]" viewBox="0 0 24 24"><circle cx="11" cy="10" r="8.500" fill="none" stroke="#222" stroke-width="2.400"/><path d="M16.500 16.500L22 22.500" stroke="#222" stroke-width="3"/></svg><span class="ml-[14px] w-[203px] -mt-px">Search</span>
    <svg class="w-[64px] h-[40px]" viewBox="0 0 64 40"><path d="M10 8c10 12 28 22 50 30l-4 2C40 34 20 26 10 8zM36 26c5-3 10-2 13-8" fill="#8a7452" stroke="#8a7452" stroke-width="1.500"/><g fill="#e2c64b"><circle cx="5" cy="5" r="3"/><circle cx="10" cy="11" r="4"/><circle cx="20" cy="5" r="4"/><circle cx="6" cy="19" r="5"/><circle cx="12" cy="21" r="4"/><circle cx="31" cy="10" r="5"/><circle cx="33" cy="16" r="4"/><circle cx="22" cy="28" r="6"/><circle cx="25" cy="34" r="4"/><circle cx="46" cy="12" r="6"/><circle cx="45" cy="22" r="6"/><circle cx="48" cy="28" r="4"/><circle cx="58" cy="20" r="3"/><circle cx="55" cy="8" r="2"/><circle cx="8" cy="35" r="2.500"/><circle cx="60" cy="12" r="2"/></g><g fill="#f3df86"><circle cx="9" cy="10" r="1.500"/><circle cx="5" cy="18" r="2"/><circle cx="30" cy="9" r="2"/><circle cx="21" cy="27" r="2"/><circle cx="45" cy="10" r="2.500"/><circle cx="44" cy="21" r="2"/></g></svg></div>
  <svg class="ml-[20px] w-[36px] h-[36px]" viewBox="0 0 36 36"><rect x="0" y="10" width="26" height="25" rx="2" fill="#2a2a2a"/><rect x="9" y="1" width="26" height="24" rx="2" fill="#f4f4f4"/><path d="M9 10h17v15H9z" fill="#a5a5a5"/></svg>
  <svg class="ml-[30px] w-[35px] h-[36px]" viewBox="0 0 36 36"><path d="M18 0a17 17.500 0 1 1-8 33L1 35l2-9A17 17.500 0 0 1 18 0z" fill="#6560c8"/><rect x="8" y="11" width="14" height="14" rx="2.500" fill="#fff"/><path d="M24 15l4-3v12l-4-3z" fill="#fff"/></svg>
  <svg class="ml-[31px] w-[37px] h-[36px]" viewBox="0 0 37 36"><path d="M0 3a2 2 0 0 1 2-2h10l4 5H0z" fill="#e0a010"/><rect y="4" width="37" height="31" rx="2" fill="#ffcf48"/><path d="M0 1h12l3 4-4 4H0z" fill="#e0a010"/><path d="M6 35V27a3 3 0 0 1 3-3h18a3 3 0 0 1 3 3v8z" fill="#1778c8"/><path d="M11 29h15" stroke="#0c4f90" stroke-width="2"/></svg>
  <div class="relative ml-[18px] w-[55px] h-[58px] rounded-[5px] bg-[#e9eefa] border border-[#c9d0e2] grid place-items-center shrink-0"><svg class="w-[36px] h-[36px]" viewBox="0 0 36 36"><circle cx="18" cy="18" r="18" fill="#1873cf"/><path d="M1 13C4 4 11 0 18 0c11 0 18 8 18 16 0 6-4 9-9 9-4 0-5-2-4-4 2-4-2-9-9-9-6 0-11 2-13 6z" fill="#35c1c9"/><path d="M24 1c8 3 12 9 12 15 0 6-4 9-9 9-4 0-5-2-4-4 3-6 3-14 1-20z" fill="#5bd77a"/><path d="M11 14c-4 8 1 19 14 20-14 5-25-6-25-17 3-4 7-5 11-3z" fill="#1c8fe0"/><path d="M14 15c-5 9 4 17 17 14-5 7-20 6-21-5 0-4 1-7 4-9z" fill="#104a94"/><circle cx="19" cy="18" r="4" fill="#e9eefa"/></svg><i class="absolute bottom-[0px] w-[24px] h-[4px] rounded-full bg-[#0a6fd0]"></i></div>
  <svg class="ml-[21px] w-[36px] h-[38px] -mt-[2px]" viewBox="0 0 36 38"><path d="M9 8V2h18v6" fill="none" stroke="#3ab5f0" stroke-width="2.500"/><rect y="6" width="36" height="32" rx="4" fill="#1a4a86"/><path d="M10 14h7.500v7.500H10z" fill="#f25022"/><path d="M18.500 14H26v7.500h-7.500z" fill="#7fba00"/><path d="M10 22.500h7.500V30H10z" fill="#00a4ef"/><path d="M18.500 22.500H26V30h-7.500z" fill="#ffb900"/></svg>
  <svg class="ml-[31px] w-[36px] h-[36px] -mt-[2px]" viewBox="0 0 36 36"><circle cx="18" cy="18" r="16.500" fill="#fff" stroke="#e0e0e0"/><path d="M18 6c6 8 5 15 0 22-5-7-6-14 0-22z" fill="#0e7a4e"/></svg>
  <div class="relative ml-[29px] w-[38px] h-[38px] shrink-0"><svg class="w-[38px] h-[38px]" viewBox="0 0 38 38"><circle cx="19" cy="19" r="18" fill="#fbc116"/><path d="M3.400 10A18 18 0 0 1 34.600 10H19a9 9 0 0 0-8 13z" fill="#e23b2e"/><path d="M3.400 10l7.800 13.500A9 9 0 0 0 21 28l-4 9A18 18 0 0 1 3.400 10z" fill="#279847"/><circle cx="19" cy="19" r="8.500" fill="#fff"/><circle cx="19" cy="19" r="6.800" fill="#3b7ded"/></svg><i class="absolute left-[15px] top-[43px] w-[8px] h-[5px] rounded-full bg-[#7d8390]"></i></div>
  <svg class="ml-[152px] w-[16px] h-[10px]" viewBox="0 0 16 10"><path d="M0 9l8-8 8 8" fill="none" stroke="#222" stroke-width="1.800"/></svg>
  <div class="ml-[19px] w-[60px] text-center text-[#1b1b1b] leading-[23px]">ENG<br>INTL</div>
  <svg class="ml-[13px] w-[26px] h-[20px] -mt-[2px]" viewBox="0 0 26 20"><g fill="none" stroke="#1b1b1b" stroke-width="1.700"><path d="M1 7a17 17 0 0 1 24 0M4.500 11a12 12 0 0 1 17 0M8 14.500a7 7 0 0 1 10 0"/></g><circle cx="13" cy="17" r="2" fill="#1b1b1b"/></svg>
  <svg class="ml-[11px] w-[25px] h-[20px] -mt-px" viewBox="0 0 25 20"><path d="M1 7h4l6-5v16l-6-5H1zM14 7a5 5 0 0 1 0 6M17 4a9 9 0 0 1 0 12M20.500 1a13 13 0 0 1 0 18" fill="none" stroke="#1b1b1b" stroke-width="1.500"/></svg>
  <svg class="ml-[11px] w-[25px] h-[16px] -mt-px" viewBox="0 0 25 16"><rect x="1" y="1" width="20" height="14" rx="3" fill="none" stroke="#1b1b1b" stroke-width="1.600"/><rect x="3.500" y="3.500" width="12" height="9" fill="#1b1b1b"/><path d="M22 5l3 1v4l-3 1z" fill="#1b1b1b"/></svg>
  <div class="ml-[17px] w-[100px] text-right text-[#1b1b1b] -mt-[3px]"><div>09:46</div><div class="tracking-[0.1px]">26/04/2024</div></div>
  <svg class="ml-[13px] w-[20px] h-[24px]" viewBox="0 0 20 24"><path d="M10 0a7.500 7.500 0 0 1 7.500 8v6l2.500 3v2H0v-2l2.500-3V8A7.500 7.500 0 0 1 10 0zM6 20.500h8a4 4 0 0 1-8 0z" fill="#0a4a9c"/></svg>
</div>

<script>
// lettered favicons: text, colour classes
const letters = {
  pdf: ['PDF', 'text-[7px] font-bold text-white pt-[3px]'],
  canva: ['C', 'text-[17px] italic text-[#eeeeff]'],
  lin: ['in', 'text-[17px] font-bold text-[#eaf0f6]'],
  rr: ['R', 'text-[17px] font-extrabold italic text-[#eeeeee]'],
  tt: ['T', 'text-[15px] italic text-[#f7e6ef]'],
  js: ['JS', 'text-[13px] font-bold text-[#5c5a48] pt-[2px]'],
};
const tab = (id, before) => {
  const bar = '<i class="block w-[1.500px] h-[30px] bg-[#767676] shrink-0"></i>';
  const l = letters[id];
  const svg = `<span class="relative block w-[21px] h-[24px] shrink-0"><svg class="w-[21px] h-[24px]"><use href="#${id}"/></svg>${l ? `<b class="absolute inset-0 grid place-items-center leading-none font-normal ${l[1]}">${l[0]}</b>` : ''}</span>`;
  return `<div class="flex-1 flex items-center">${before ? bar + svg : svg + bar}</div>`;
};
document.getElementById('tabsA').innerHTML = 'gmail github gmail google google red pink greenb ring drive ring2 orangec lucid'.split(' ').map(t => tab(t, true)).join('');
document.getElementById('tabsB').innerHTML = 'google lens lens lens co file chat dribb drive lens gfg gfg bing github file lens print pdf canva lin lens lens rr file file lin tt lin lens codepen google js wa ring ring file pink pink drive ring lens w3 w3 w3 w3 w3 w3 w3 w3 file w3'.split(' ').map(t => tab(t, false)).join('');

document.getElementById('libs').innerHTML = [['Shapes In Use', 0, '', 'tracking-[0.6px]'], ['Standard', 1, '', 'tracking-[0.85px]'], ['Flowchart', 1, '', 'tracking-[0.75px]'], ['Shapes', 1, '', 'tracking-[0.75px]'], ['My saved sh...', 1, 'rotate-180', 'tracking-[0.2px]']].map(([n, tools, rot, tr]) =>
  `<div class="h-[97px] border-b border-[#cdd2d9] flex items-center pl-[13px]"><svg class="w-[10px] h-[20px]"><use href="#grip"/></svg><span class="ml-[13px] mt-px w-[162px] whitespace-nowrap ${tr}">${n}</span><span class="flex items-center w-[50px] h-[24px]">${tools ? '<svg class="w-[20px] h-[20px] [--sw:1.800]"><use href="#star"/></svg><svg class="ml-[11px] w-[18px] h-[22px]"><use href="#trash"/></svg>' : ''}</span><svg class="ml-[24px] w-[16px] h-[10px] ${rot}"><use href="#down"/></svg></div>`).join('');

let g = '';
for (let k = -2; k < 36; k++) { const x = Math.round(463 + 25.53 * k); if (x < 1354 && x > 390) g += `<rect x="${x}" y="263" width="1" height="690" fill="${k % 4 ? '#ebebeb' : '#dadada'}"/>`; }
for (let k = -2; k < 26; k++) { const y = Math.round(325.3 + 25.53 * k); if (y < 953) g += `<rect x="390" y="${y}" width="964" height="1" fill="${k % 4 ? '#ebebeb' : '#dadada'}"/>`; }
document.getElementById('grid').innerHTML = g;

const T = (x, y, s, a = 'start', c = '#33363c') => `<text x="${x}" y="${y + 2}" font-size="6" text-anchor="${a}" fill="${c}" stroke="${c}" stroke-width=".22">${s}</text>`;
function entity(x, y, w, h, mid, title, rows, centred) {
  let s = `<rect x="${x}" y="${y}" width="${w}" height="${h}" rx="2" fill="#feeffb" stroke="#ffc8f0" stroke-width="1.200"/><path d="M${x} ${y + 13}H${x + w}M${mid} ${y + 13}V${y + h}" stroke="#ffc8f0" stroke-width="1.200"/>`;
  if (title) s += T(x + w / 2, y + 5.500, title, 'middle', '#5a5d63');
  rows.forEach(([a, b], i) => { const ry = y + 17.300 + i * 10.200; s += centred ? T((x + mid) / 2, ry, a, 'middle') + T((mid + x + w) / 2, ry, b, 'middle') : T(x + 2, ry, a) + T(mid + 1.500, ry, b); });
  return s;
}
let e = '';
e += entity(848.5, 334.5, 284, 53.500, 990.5, 'SportSession', [['SessionID PK', 'string'], ['SportType', 'string'], ['Schedule', 'datetime'], ['GymnasiumName FK', 'string']]);
e += entity(768.5, 503.5, 402.500, 64, 970.5, '', [['CoachID PK', 'string'], ['LastName', 'string'], ['FirstName', 'string'], ['Age', 'number'], ['Specialty', 'string']], true);
e += entity(828.5, 652.5, 284, 43.500, 970.5, 'Gymnasium', [['Name PK', 'string'], ['Address', 'string'], ['TelephoneNumber', 'string']]);
e += entity(849.5, 778, 284, 84.500, 991.5, 'Member', [['MemberID PK', 'string'], ['LastName', 'string'], ['FirstName', 'string'], ['Address', 'string'], ['DateOfBirth', 'date'], ['Gender', 'string'], ['GymnasiumName FK', 'string']]);
e += '<g fill="none" stroke="#282c33" stroke-width="1"><path d="M848 361.500H756.500V674.500H828" stroke-opacity=".4"/><path d="M815.500 361.500V820H849M836.500 361.500V820" stroke-opacity=".16"/><path d="M815 361.500H843" stroke-opacity=".6"/><path d="M842.500 358v7M848 358l-5 3.500 5 3.500M756 535.700h8M762.500 532v7M828 671l-6 3.500 6 3.500M822.500 671v7M849 816.500l-6 3.500 6 3.500" stroke-width=".9"/><circle cx="819" cy="674.500" r="3.200" fill="#fff" stroke-width=".7"/><circle cx="840" cy="820" r="3.200" fill="#fff" stroke-width=".7"/></g>';
[[756.5, 407.5, 'led by', '#fff'], [756.5, 634, 'works at', '#fff'], [816, 507, 'located in', '#feeffb'], [836, 590, 'enrolls in', '#fff'], [816, 757, 'registers', '#fff']].forEach(([x, y, s, f]) => e += `<rect x="${x - 6}" y="${y - 4}" width="12" height="8" fill="${f}"/>` + T(x, y, '"' + s + '"', 'middle', '#55585e'));
e += '<g stroke="#5254df" stroke-width="1.400" fill="#fff"><rect x="768.500" y="503.500" width="402.500" height="64" fill="none"/>';
for (const x of [768.7, 1171.2]) {
  for (const y of [509, 521, 531.5, 541.8, 552, 561]) e += `<circle cx="${x}" cy="${y}" r="6" fill-opacity=".9"/>`;
  for (const y of [503.5, 567.5]) e += `<rect x="${x - 6.700}" y="${y - 6.700}" width="13.400" height="13.400" rx="2"/><circle cx="${x}" cy="${y < 530 ? 509 : 562}" r="6" fill="none" stroke-opacity=".15"/>`;
}
e += '<circle cx="970" cy="503.500" r="6"/><circle cx="970" cy="567.500" r="6"/><rect x="962.500" y="508.500" width="14" height="14" fill="#e4e5f2" stroke="#14149a"/></g>';
e += '<circle cx="970" cy="448.700" r="12" fill="#fff" stroke="#959aa5" stroke-width="1.200"/><g fill="none" stroke="#555960" stroke-width=".9"><rect x="963.500" y="442.500" width="5.500" height="5.500"/><path d="M976 448v-3h-4M973.500 443l-2 2 2 2M964 451v2.500h4M966 451.500l2 2-2 2M973.500 450l3 5h-6z"/></g>';
e += '<path d="M744.500 496c0-9 6-16 16-16" fill="none" stroke="#3b40c1" stroke-width="3"/><path d="M760 475l5.500 5-5.500 5zM739 495h11l-5.500 6z" fill="#3b40c1"/>';
document.getElementById('ents').innerHTML = e;
</script>
</body></html>
